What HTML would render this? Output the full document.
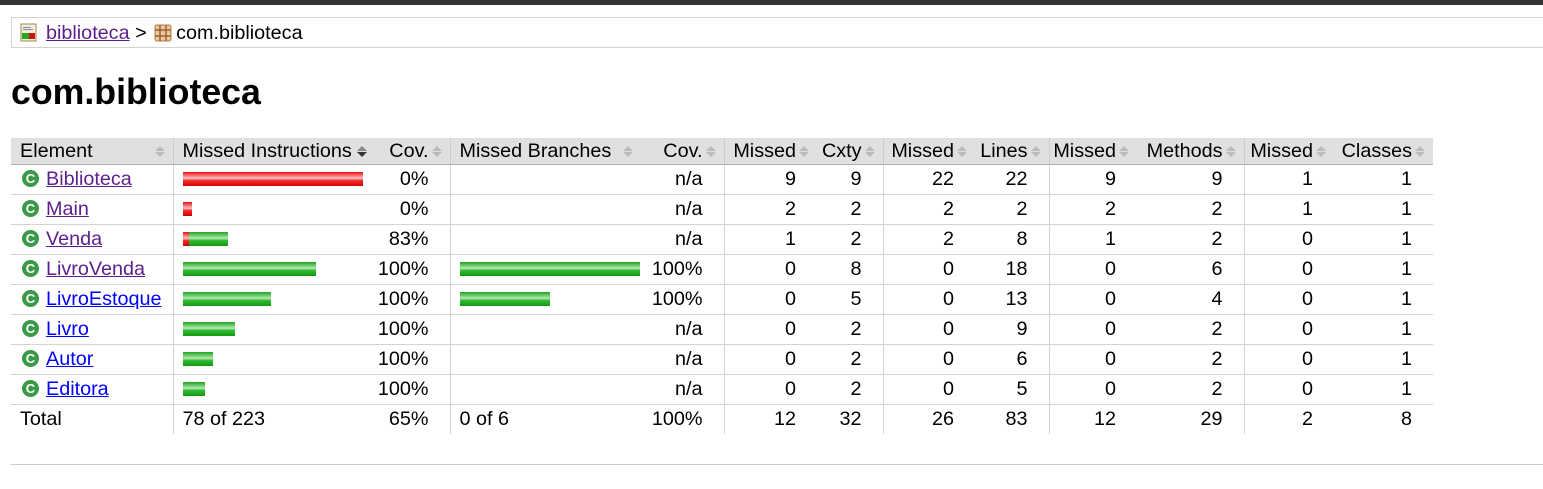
<!DOCTYPE html>
<html><head><meta charset="utf-8"><style>
body{margin:0;font-family:"Liberation Sans",Arial,sans-serif;font-size:19.8px;background:#fff;color:#000;width:1543px;height:489px;overflow:hidden;position:relative}
.top{height:5px;background:#333}
.bc{position:absolute;left:11px;top:17px;right:-2px;height:29px;border:1px solid #d6d3ce;line-height:30px;padding-left:8px}
a{color:#5c1f8c;text-decoration:underline}
a.b{color:#00f}
h1{position:absolute;left:11px;top:72px;margin:0;font-size:35.7px;font-weight:bold;line-height:40px}
table{position:absolute;left:11px;top:138px;border-collapse:collapse;table-layout:fixed;width:1422px}
td{height:29px;border-bottom:1px solid #d6d3ce;padding:0;white-space:nowrap;line-height:29px;overflow:visible}
thead td{background:#e0e0e0;height:25px;line-height:26px;border-bottom:1px solid #b0b0b0;position:relative}
td.r{text-align:right;padding-right:21px}
td.l{padding-left:9px}
.bl{border-left:1px solid #d6d3ce}
thead .bl{border-left:1px solid #ccc}
tfoot td{border-bottom:none}
.s{position:absolute;right:8px;top:8px;width:0;height:0;border:5px solid transparent;border-bottom:5px solid #bbb;border-top:none}
.s:after{content:"";position:absolute;left:-5px;top:6px;border:5px solid transparent;border-top:5px solid #bbb;border-bottom:none}
.bar{display:inline-block;height:14px;vertical-align:middle;position:relative;top:-1px}
.g{background:linear-gradient(#1ea31e,#b0eab0 45%,#33bb33 60%,#119911)}
.rd{background:linear-gradient(#e81010,#ffc0c0 45%,#f43030 60%,#d00000)}
.ic{display:inline-block;width:17px;height:17px;border-radius:50%;background:#3a9a48;color:#fff;font-size:13px;font-weight:bold;text-align:center;line-height:17px;vertical-align:middle;margin:0 7px 0 2px;position:relative;top:-1px}
.line{position:absolute;left:11px;right:0;top:464px;border-top:1px solid #ccc}
</style></head><body>
<div class="top"></div>
<div class="bc"><svg width="18" height="19" style="vertical-align:-3px;margin-right:8px"><rect x="1" y="1" width="15" height="17" fill="#f4efd8" stroke="#a08850"/><rect x="3" y="4" width="8" height="1" fill="#88a"/><rect x="3" y="6" width="10" height="1" fill="#88a"/><rect x="2" y="10" width="7" height="6" fill="#2a2"/><rect x="9" y="10" width="6" height="6" fill="#c11"/></svg><a href="#">biblioteca</a> &gt; <svg width="18" height="18" style="vertical-align:-3px;margin:0 4px 0 2px"><rect x="1" y="1" width="16" height="16" rx="2" fill="#e8c8a0" stroke="#b07840"/><path d="M6 1V17M12 1V17M1 6H17M1 12H17" stroke="#a06030" stroke-width="1.5"/></svg>com.biblioteca</div>
<h1>com.biblioteca</h1>
<table>
<colgroup><col style="width:162px"><col style="width:203px"><col style="width:74px"><col style="width:193px"><col style="width:81px"><col style="width:93px"><col style="width:66px"><col style="width:92px"><col style="width:74px"><col style="width:88px"><col style="width:107px"><col style="width:90px"><col style="width:99px"></colgroup>
<thead><tr><td class="l">Element<span class="s"></span></td><td class="l bl">Missed Instructions<span style="position:absolute;left:183px;top:8px;border:5px solid transparent;border-bottom:5px solid #888;border-top:none"></span><span style="position:absolute;left:183px;top:14px;border:5px solid transparent;border-top:5px solid #333;border-bottom:none"></span></td><td class="r">Cov.<span class="s"></span></td><td class="l bl">Missed Branches<span class="s" style="right:10px"></span></td><td class="r">Cov.<span class="s"></span></td><td class="r bl">Missed<span class="s"></span></td><td class="r">Cxty<span class="s"></span></td><td class="r bl">Missed<span class="s"></span></td><td class="r">Lines<span class="s"></span></td><td class="r bl">Missed<span class="s"></span></td><td class="r">Methods<span class="s"></span></td><td class="r bl">Missed<span class="s"></span></td><td class="r">Classes<span class="s"></span></td></tr></thead>
<tbody>
<tr><td class="l"><span class="ic">C</span><a href="#">Biblioteca</a></td><td class="l bl"><span class="bar rd" style="width:180px"></span></td><td class="r">0%</td><td class="bl"></td><td class="r">n/a</td><td class="r bl">9</td><td class="r">9</td><td class="r bl">22</td><td class="r">22</td><td class="r bl">9</td><td class="r">9</td><td class="r bl">1</td><td class="r">1</td></tr>
<tr><td class="l"><span class="ic">C</span><a href="#">Main</a></td><td class="l bl"><span class="bar rd" style="width:9px"></span></td><td class="r">0%</td><td class="bl"></td><td class="r">n/a</td><td class="r bl">2</td><td class="r">2</td><td class="r bl">2</td><td class="r">2</td><td class="r bl">2</td><td class="r">2</td><td class="r bl">1</td><td class="r">1</td></tr>
<tr><td class="l"><span class="ic">C</span><a href="#">Venda</a></td><td class="l bl"><span class="bar rd" style="width:6px"></span><span class="bar g" style="width:39px"></span></td><td class="r">83%</td><td class="bl"></td><td class="r">n/a</td><td class="r bl">1</td><td class="r">2</td><td class="r bl">2</td><td class="r">8</td><td class="r bl">1</td><td class="r">2</td><td class="r bl">0</td><td class="r">1</td></tr>
<tr><td class="l"><span class="ic">C</span><a href="#">LivroVenda</a></td><td class="l bl"><span class="bar g" style="width:133px"></span></td><td class="r">100%</td><td class="l bl"><span class="bar g" style="width:180px"></span></td><td class="r">100%</td><td class="r bl">0</td><td class="r">8</td><td class="r bl">0</td><td class="r">18</td><td class="r bl">0</td><td class="r">6</td><td class="r bl">0</td><td class="r">1</td></tr>
<tr><td class="l"><span class="ic">C</span><a href="#" class="b">LivroEstoque</a></td><td class="l bl"><span class="bar g" style="width:88px"></span></td><td class="r">100%</td><td class="l bl"><span class="bar g" style="width:90px"></span></td><td class="r">100%</td><td class="r bl">0</td><td class="r">5</td><td class="r bl">0</td><td class="r">13</td><td class="r bl">0</td><td class="r">4</td><td class="r bl">0</td><td class="r">1</td></tr>
<tr><td class="l"><span class="ic">C</span><a href="#" class="b">Livro</a></td><td class="l bl"><span class="bar g" style="width:52px"></span></td><td class="r">100%</td><td class="bl"></td><td class="r">n/a</td><td class="r bl">0</td><td class="r">2</td><td class="r bl">0</td><td class="r">9</td><td class="r bl">0</td><td class="r">2</td><td class="r bl">0</td><td class="r">1</td></tr>
<tr><td class="l"><span class="ic">C</span><a href="#" class="b">Autor</a></td><td class="l bl"><span class="bar g" style="width:30px"></span></td><td class="r">100%</td><td class="bl"></td><td class="r">n/a</td><td class="r bl">0</td><td class="r">2</td><td class="r bl">0</td><td class="r">6</td><td class="r bl">0</td><td class="r">2</td><td class="r bl">0</td><td class="r">1</td></tr>
<tr><td class="l"><span class="ic">C</span><a href="#" class="b">Editora</a></td><td class="l bl"><span class="bar g" style="width:22px"></span></td><td class="r">100%</td><td class="bl"></td><td class="r">n/a</td><td class="r bl">0</td><td class="r">2</td><td class="r bl">0</td><td class="r">5</td><td class="r bl">0</td><td class="r">2</td><td class="r bl">0</td><td class="r">1</td></tr>
</tbody>
<tfoot><tr><td class="l">Total</td><td class="l bl">78 of 223</td><td class="r">65%</td><td class="l bl">0 of 6</td><td class="r">100%</td><td class="r bl">12</td><td class="r">32</td><td class="r bl">26</td><td class="r">83</td><td class="r bl">12</td><td class="r">29</td><td class="r bl">2</td><td class="r">8</td></tr></tfoot>
</table>
<div class="line"></div>
</body></html>
